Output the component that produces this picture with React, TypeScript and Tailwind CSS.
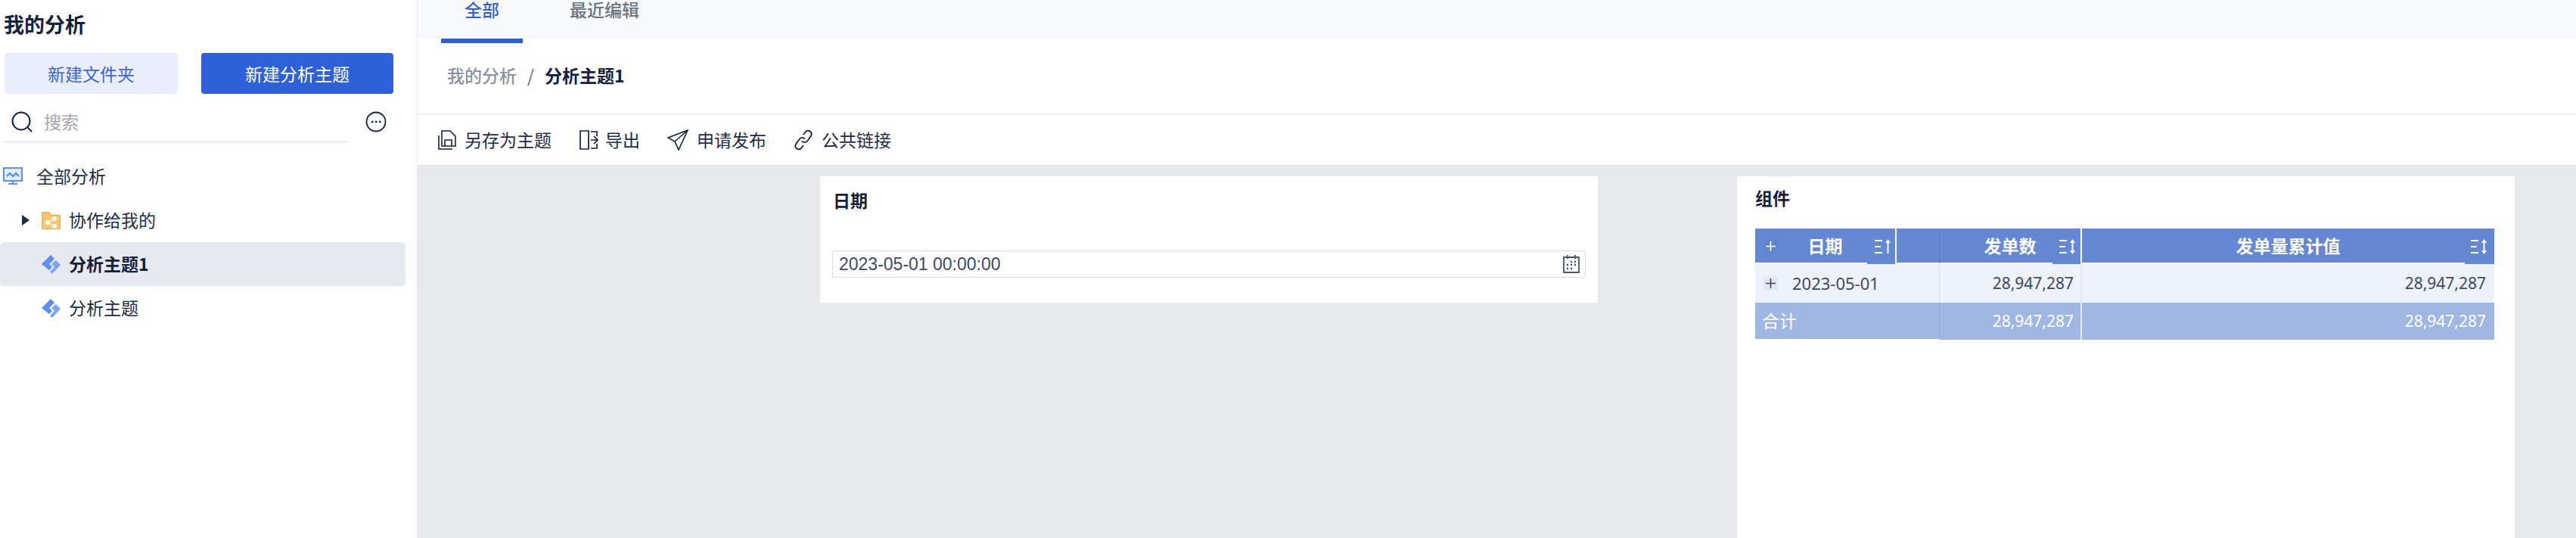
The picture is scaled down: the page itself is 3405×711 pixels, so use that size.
import type { ReactNode } from 'react';

const font = { fontFamily: '"Noto Sans CJK SC", "Noto Sans", sans-serif' };

function ThemeIcon() {
  return (
    <svg width="25" height="25" viewBox="0 0 25 25" className="shrink-0">
      <path d="M12 0l5 5-7 7 4 4-4 4L0 12z" fill="#5b8ff9" />
      <path d="M19 7l6 6-11 12-3-3 6-6-4-4z" fill="#7aa5fa" />
    </svg>
  );
}

function SortIcon({ up }: { up?: boolean }) {
  return (
    <svg width="22" height="20" viewBox="0 0 22 20" fill="#fff">
      <rect x="0" y="1" width="10" height="2" />
      <rect x="0" y="9" width="8" height="2" />
      <rect x="0" y="17" width="10" height="2" />
      <rect x="16.5" y="4" width="2" height={up ? 15 : 12} />
      <path d="M17.5 0l3.5 5h-7z" />
      {!up && <path d="M17.5 20l3.500-5h-7z" />}
    </svg>
  );
}

function SortBlock({ up, className }: { up?: boolean; className: string }) {
  return (
    <div className={`absolute top-0 right-0 flex h-[47px] items-center justify-end bg-[#6488d3] ${className}`}>
      <SortIcon up={up} />
    </div>
  );
}

function PlusBox({ dark }: { dark?: boolean }) {
  return (
    <span className={`flex h-[19px] w-[19px] shrink-0 items-center justify-center ${dark ? 'bg-[#e3e8f1] text-[#3d4a60]' : 'bg-[#5f83cc] text-white'}`}>
      <svg width="15" height="15" viewBox="0 0 15 15" stroke="currentColor" strokeWidth="1.6">
        <path d="M7.5 1v13M1 7.5h13" />
      </svg>
    </span>
  );
}

function ToolItem({ icon, label, gap }: { icon: ReactNode; label: string; gap: string }) {
  return (
    <div className={`flex items-center ${gap}`}>
      {icon}
      <span className="mb-[1px]">{label}</span>
    </div>
  );
}

export default function App() {
  return (
    <div style={font} className="flex h-[711px] w-[3405px] overflow-hidden bg-white text-[23px] text-[#1d2c48]">
      {/* Sidebar */}
      <aside className="flex w-[552px] shrink-0 flex-col border-r border-[#e4e6eb]">
        <h1 className="mt-[15px] h-[34px] pl-[5px] text-[27px] leading-[34px] font-bold text-[#14213d]">我的分析</h1>
        <div className="mt-[21px] flex pl-[6px]">
          <button className="h-[54px] w-[229px] rounded-[4px] bg-[#e9eefa] text-[#3d66dc]">新建文件夹</button>
          <button className="ml-[31px] h-[54px] w-[254px] rounded-[4px] bg-[#2e60dc] text-white">新建分析主题</button>
        </div>
        <div className="mt-[10px] flex items-center pl-[6px]">
          <div className="flex h-[54px] w-[453px] items-center border-b border-[#dcdfe8] pl-[9px]">
            <svg width="28" height="28" viewBox="0 0 28 28" fill="none" stroke="#14213d" strokeWidth="2">
              <circle cx="13" cy="13" r="11.5" />
              <path d="M21 21l6 6" />
            </svg>
            <span className="ml-[15px] text-[#a3a6ad]">搜索</span>
          </div>
          <svg width="28" height="28" viewBox="0 0 28 28" fill="none" stroke="#14213d" strokeWidth="1.8" className="mb-[1px] ml-[24px]">
            <circle cx="14" cy="14" r="12.5" />
            <path d="M8 14h2.4M13 14h2.4M18 14h2.4" strokeWidth="2.4" />
          </svg>
        </div>
        <div className="mt-[29px] flex h-[32px] items-center pl-[4px]">
          <svg width="26" height="24" viewBox="0 0 26 24" className="shrink-0">
            <rect x="1" y="1" width="24" height="17" fill="#e4edfe" stroke="#5b8ff9" strokeWidth="2" />
            <path d="M5 12l4-4 4 4 4-4 4 4" fill="none" stroke="#5b8ff9" strokeWidth="2.4" />
            <path d="M12 18h2v3h-2zM7 21h12v2H7z" fill="#5b8ff9" />
          </svg>
          <span className="mb-[2px] ml-[18px]">全部分析</span>
        </div>
        <div className="mt-[26px] flex h-[32px] items-center pl-[29px]">
          <svg width="10" height="14" viewBox="0 0 10 14" className="shrink-0">
            <path d="M0 0l10 7-10 7z" fill="#1d2c48" />
          </svg>
          <svg width="25" height="23" viewBox="0 0 25 23" className="ml-[16px] shrink-0">
            <path d="M0.5 0.5h9l3 4h12v18H0.5z" fill="#fbc66f" stroke="#f7ad45" strokeWidth="1.5" />
            <g fill="#fff">
              <circle cx="8" cy="14" r="3" />
              <circle cx="17" cy="9" r="3" />
              <circle cx="17" cy="19" r="3" />
            </g>
            <path d="M8 14l9-5M8 14l9 5" stroke="#fff" strokeWidth="1.4" />
          </svg>
          <span className="mb-[2px] ml-[11px]">协作给我的</span>
        </div>
        <div className="mt-[13px] flex h-[58px] w-[536px] items-center rounded-[5px] bg-[#e6e9f0] pl-[55px] font-bold text-[#14213d]">
          <ThemeIcon />
          <span className="mb-[2px] ml-[11px]">分析主题1</span>
        </div>
        <div className="flex h-[58px] items-center pl-[55px]">
          <ThemeIcon />
          <span className="mb-[2px] ml-[11px]">分析主题</span>
        </div>
      </aside>

      {/* Main */}
      <main className="flex min-w-0 flex-1 flex-col">
        <div className="flex h-[51px] shrink-0 items-start bg-[#f8f9fd] pl-[31px] font-medium">
          <div className="relative w-[108px] text-center leading-[24px] text-[#2e60dc]">
            全部
            <div className="absolute top-[51px] left-0 h-[6px] w-full bg-[#2e60dc]" />
          </div>
          <div className="ml-[62px] leading-[24px] text-[#6b7280]">最近编辑</div>
        </div>
        <div className="flex h-[101px] shrink-0 items-center border-b-2 border-[#eceef1] pb-[2px] pl-[39px]">
          <span className="font-medium text-[#8c93a0]">我的分析</span>
          <span className="mx-[14px] text-[#5c6678]">/</span>
          <span className="font-bold text-[#14213d]">分析主题1</span>
        </div>
        <div className="flex h-[68px] shrink-0 items-center border-b-2 border-[#e2e4e8] pl-[27px]">
          <ToolItem
            gap="gap-[11px]"
            label="另存为主题"
            icon={
              <svg width="24" height="26" viewBox="0 0 24 26" fill="none" stroke="#14213d" strokeWidth="1.6">
                <path d="M5 21V1h11l7 7v13z" />
                <path d="M9 21v-8h9v8" />
                <path d="M1 7v18h18" />
              </svg>
            }
          />
          <div className="ml-[37px]">
            <ToolItem
              gap="gap-[9px]"
              label="导出"
              icon={
                <svg width="25" height="26" viewBox="0 0 25 26" fill="none" stroke="#14213d" strokeWidth="1.7">
                  <path d="M1 1h11v24H1zM15 2h8v6M23 18v6h-8" />
                  <path d="M15 13h8M19 8l5 5-5 5" />
                </svg>
              }
            />
          </div>
          <div className="ml-[36px]">
            <ToolItem
              gap="gap-[11px]"
              label="申请发布"
              icon={
                <svg width="28" height="28" viewBox="0 0 28 28" fill="none" stroke="#14213d" strokeWidth="1.6">
                  <path d="M27 1L1 11l9 5 5 11zM27 1L10 16" />
                </svg>
              }
            />
          </div>
          <div className="ml-[37px]">
            <ToolItem
              gap="gap-[12px]"
              label="公共链接"
              icon={
                <svg width="24" height="28" viewBox="0 0 24 28" fill="none" stroke="#14213d" strokeWidth="1.8">
                  <path d="M12 7l3-4a4.500 4.500 0 017 5.500l-5 7a4.500 4.500 0 01-7 0" />
                  <path d="M12 21l-3 4a4.500 4.500 0 01-7-5.500l5-7a4.500 4.500 0 017 0" />
                </svg>
              }
            />
          </div>
        </div>

        {/* Canvas */}
        <div className="flex min-h-0 flex-1 items-start gap-[184px] bg-[#e8e9ed] pt-[13px] pl-[532px]">
          <section className="h-[167px] w-[1028px] bg-white px-[16px]">
            <h2 className="mt-[15px] pl-[1px] leading-[32px] font-bold text-[#14213d]">日期</h2>
            <div className="mt-[51px] flex h-[36px] items-center justify-between rounded-[3px] border border-[#d9dbe1] pr-[7px] pl-[8px]">
              <span style={{ fontFamily: '"Liberation Sans", sans-serif' }} className="text-[23px] text-[#3d4a60]">2023-05-01 00:00:00</span>
              <svg width="22" height="24" viewBox="0 0 22 24" fill="none" stroke="#4a5568" strokeWidth="1.8">
                <path d="M1 3h20v20H1z" />
                <path d="M6 0v5M16 0v5" />
                <path d="M10 9h2M15 9h2M5 13h2M10 13h2M15 13h2M5 18h2M10 18h2" strokeWidth="2.4" />
              </svg>
            </div>
          </section>

          <section className="h-[478px] w-[1028px] bg-white px-[24px]">
            <h2 className="h-[69px] pt-[12px] leading-[32px] font-bold text-[#14213d]">组件</h2>
            <div style={{ fontFamily: '"Noto Sans", "Noto Sans CJK SC", sans-serif' }} className="grid w-[977px] grid-cols-[244px_188px_545px] text-[21px]">
              {/* Header */}
              <div className="flex h-[47px] bg-[#6488d3] text-[23px] font-bold text-white">
                <div className="relative flex h-[47px] w-[187px] items-center justify-center border-r-2 border-b-2 border-white pt-[2px]">
                  <div className="absolute top-[14px] left-[11px]">
                    <PlusBox />
                  </div>
                  日期
                  <SortBlock up className="w-[37px] pr-[5px]" />
                </div>
                <div className="h-[47px] flex-1 border-r border-b-2 border-r-[#5b7dc4] border-b-white" />
              </div>
              <div className="relative flex h-[47px] items-center justify-center border-r-2 border-b-2 border-white bg-[#6488d3] pt-[2px] text-[23px] font-bold text-white">
                发单数
                <SortBlock className="w-[37px] pr-[6px]" />
              </div>
              <div className="relative flex h-[47px] items-center justify-center border-b-2 border-white bg-[#6488d3] pt-[2px] text-[23px] font-bold text-white">
                发单量累计值
                <SortBlock className="w-[39px] pr-[9px]" />
              </div>

              {/* Data row */}
              <div className="flex h-[51px] items-center border-r border-[#d9dfeb] bg-[#edf2fb] pl-[11px] text-[#3d4a60]">
                <PlusBox dark />
                <span className="ml-[19px] text-[22px]">2023-05-01</span>
              </div>
              <div className="flex h-[51px] items-center justify-end border-r-2 border-[#e3e8f2] bg-[#edf2fb] pr-[9px] text-[#3d4a60]">28,947,287</div>
              <div className="flex h-[51px] items-center justify-end bg-[#edf2fb] pr-[11px] text-[#3d4a60]">28,947,287</div>

              {/* Total row */}
              <div className="flex h-[49px] items-center border-r border-b border-r-[#94abdb] border-b-white bg-[#a1b7e3] pl-[9px] text-[23px] text-white">合计</div>
              <div className="flex h-[49px] items-center justify-end border-r-2 border-white/70 bg-[#a1b7e3] pr-[9px] text-white">28,947,287</div>
              <div className="flex h-[49px] items-center justify-end bg-[#a1b7e3] pr-[11px] text-white">28,947,287</div>
            </div>
          </section>
        </div>
      </main>
    </div>
  );
}
